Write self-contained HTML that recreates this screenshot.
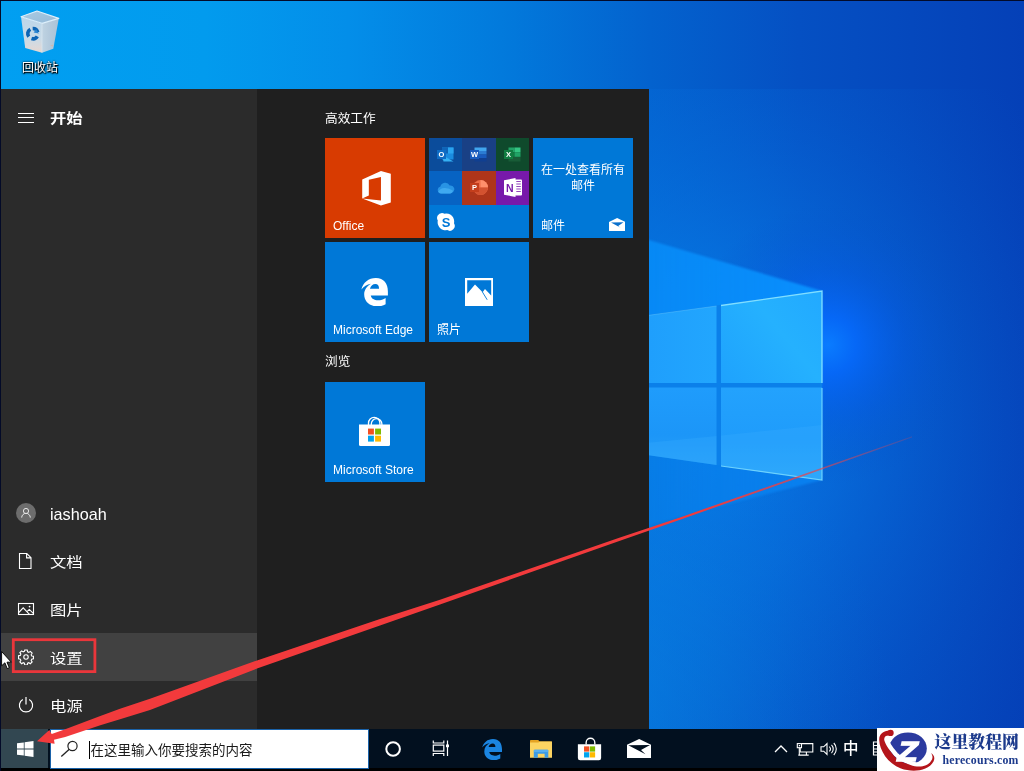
<!DOCTYPE html>
<html lang="zh-CN">
<head>
<meta charset="utf-8">
<title>开始</title>
<style>
html,body{margin:0;padding:0;}
body{width:1024px;height:771px;overflow:hidden;position:relative;background:#0450c8;
  font-family:"Liberation Sans","Noto Sans CJK SC",sans-serif;color:#fff;}
.abs{position:absolute;}
#wall{position:absolute;left:0;top:0;width:1024px;height:771px;}
#bin-label{will-change:transform;position:absolute;left:10px;top:60px;width:60px;text-align:center;font-size:12px;line-height:16px;color:#fff;
  text-shadow:1px 1px 1px #000,0 0 2px #000,0 1px 2px #000;}
#menu{will-change:transform;position:absolute;left:1px;top:89px;width:648px;height:640px;background:#1f1f1f;}
#left{position:absolute;left:0;top:0;width:256px;height:640px;background:#2b2b2b;}
.row{position:absolute;left:0;width:256px;height:48px;}
.row .lbl{position:absolute;left:48.500px;top:0.500px;line-height:48px;font-size:15px;white-space:nowrap;transform:scale(1.090,0.900);transform-origin:0 50%;}
.row svg{position:absolute;}
.hdr{position:absolute;font-size:12.300px;line-height:16px;color:#fff;white-space:nowrap;transform:scale(1.030,1);transform-origin:0 50%;}
.tile{position:absolute;width:100px;height:100px;background:#0078d7;overflow:hidden;}
.tile .tl{position:absolute;left:8px;bottom:4px;font-size:12px;line-height:16px;white-space:nowrap;}
#taskbar{will-change:transform;position:absolute;left:0;top:729px;width:1024px;height:42px;background:#02101f;}
#wm{will-change:transform;position:absolute;left:877px;top:728px;width:147px;height:43px;background:#fff;overflow:hidden;}
</style>
</head>
<body>
<!-- WALLPAPER -->
<svg id="wall" viewBox="0 0 1024 771">
  <defs>
    <linearGradient id="bgH" x1="0" y1="0" x2="1" y2="0">
      <stop offset="0" stop-color="#019ff1"/>
      <stop offset="0.20" stop-color="#029bee"/>
      <stop offset="0.34" stop-color="#038ee9"/>
      <stop offset="0.49" stop-color="#027adc"/>
      <stop offset="0.635" stop-color="#0362ce"/>
      <stop offset="0.78" stop-color="#0550c3"/>
      <stop offset="1" stop-color="#0540b7"/>
    </linearGradient>
    <radialGradient id="amb" cx="700" cy="420" r="420" gradientUnits="userSpaceOnUse" gradientTransform="translate(700 420) scale(1 1.15) translate(-700 -420)">
      <stop offset="0" stop-color="#0a8af4" stop-opacity="0.75"/>
      <stop offset="0.35" stop-color="#0880ec" stop-opacity="0.5"/>
      <stop offset="0.7" stop-color="#0670e0" stop-opacity="0.2"/>
      <stop offset="1" stop-color="#0560d0" stop-opacity="0"/>
    </radialGradient>
    <radialGradient id="botamb" cx="560" cy="700" r="330" gradientUnits="userSpaceOnUse">
      <stop offset="0" stop-color="#0a8cea" stop-opacity="0.6"/>
      <stop offset="0.5" stop-color="#0880e0" stop-opacity="0.35"/>
      <stop offset="1" stop-color="#0670d8" stop-opacity="0"/>
    </radialGradient>
    <radialGradient id="glow" cx="828" cy="345" r="140" gradientUnits="userSpaceOnUse">
      <stop offset="0" stop-color="#0a7cff" stop-opacity="1"/>
      <stop offset="0.2" stop-color="#0668fa" stop-opacity="0.9"/>
      <stop offset="0.55" stop-color="#0558e4" stop-opacity="0.4"/>
      <stop offset="1" stop-color="#0550c8" stop-opacity="0"/>
    </radialGradient>
    <linearGradient id="beamUp" x1="822" y1="0" x2="350" y2="0" gradientUnits="userSpaceOnUse">
      <stop offset="0" stop-color="#0a92ff" stop-opacity="0.95"/>
      <stop offset="0.4" stop-color="#088efa" stop-opacity="0.8"/>
      <stop offset="1" stop-color="#0a90f0" stop-opacity="0"/>
    </linearGradient>
    <linearGradient id="beamDn" x1="822" y1="0" x2="350" y2="0" gradientUnits="userSpaceOnUse">
      <stop offset="0" stop-color="#0a86f6" stop-opacity="0.8"/>
      <stop offset="0.4" stop-color="#0880ea" stop-opacity="0.5"/>
      <stop offset="1" stop-color="#0a84e0" stop-opacity="0"/>
    </linearGradient>
    <linearGradient id="paneUR" x1="721" y1="383" x2="822" y2="300" gradientUnits="userSpaceOnUse">
      <stop offset="0" stop-color="#1ea2fd"/>
      <stop offset="0.6" stop-color="#25b1fe"/>
      <stop offset="1" stop-color="#22aaff"/>
    </linearGradient>
    <linearGradient id="paneUL" x1="649" y1="0" x2="716" y2="0" gradientUnits="userSpaceOnUse">
      <stop offset="0" stop-color="#1f9ffc"/>
      <stop offset="1" stop-color="#22a6fe"/>
    </linearGradient>
    <linearGradient id="paneLR" x1="0" y1="388" x2="0" y2="480" gradientUnits="userSpaceOnUse">
      <stop offset="0" stop-color="#23a2fd"/>
      <stop offset="0.55" stop-color="#1f9cfb"/>
      <stop offset="1" stop-color="#2aa6fa"/>
    </linearGradient>
    <linearGradient id="paneLL" x1="0" y1="388" x2="0" y2="465" gradientUnits="userSpaceOnUse">
      <stop offset="0" stop-color="#1f9cfc"/>
      <stop offset="0.6" stop-color="#1c96f8"/>
      <stop offset="1" stop-color="#259ff8"/>
    </linearGradient>
    <filter id="soft" x="-5%" y="-5%" width="110%" height="110%" color-interpolation-filters="sRGB"><feGaussianBlur stdDeviation="1.2"/></filter>
  </defs>
  <rect width="1024" height="771" fill="url(#bgH)"/>
  <rect x="560" y="89" width="464" height="682" fill="url(#amb)"/>
  <rect x="560" y="380" width="464" height="391" fill="url(#botamb)"/>
  <!-- glow right of window -->
  <rect x="640" y="150" width="384" height="400" fill="url(#glow)"/>
  <!-- light beams to the left -->
  <g filter="url(#soft)">
  <polygon points="822,480 350,602 350,383 822,383" fill="url(#beamDn)"/>
  <polygon points="822,291 350,152 350,470 822,383" fill="url(#beamUp)"/>
  </g>
  <!-- window gaps -->
  <polygon points="640,316 822,291 822,480 640,454" fill="#0b80ea"/>
  <!-- panes -->
  <polygon points="721,305.5 822,291 822,383 721,383" fill="url(#paneUR)"/>
  <polygon points="640,316.5 716.5,306 716.5,383 640,383" fill="url(#paneUL)"/>
  <polygon points="721,387.5 822,387.5 822,480 721,466" fill="url(#paneLR)"/>
  <polygon points="640,387.5 716.5,387.5 716.5,465 640,454" fill="url(#paneLL)"/>
  <!-- floor reflection inside lower panes -->
  <polygon points="640,443.5 716.5,436 716.5,465 640,454" fill="#3ab0ff" fill-opacity="0.25"/>
  <polygon points="721,435.500 822,425 822,480 721,466" fill="#3ab0ff" fill-opacity="0.25"/>
  <!-- bright edges -->
  <polyline points="721,305.5 822,291 822,383" fill="none" stroke="#86e2ff" stroke-width="1.3" stroke-opacity="0.95"/>
  <polyline points="822,388 822,480 721,466" fill="none" stroke="#7adcff" stroke-width="1.2" stroke-opacity="0.85"/>
  <line x1="640" y1="316.5" x2="716.5" y2="306" stroke="#5cc4ff" stroke-width="1" stroke-opacity="0.5"/>
</svg>

<!-- START MENU -->
<div id="menu">
  <div id="left">
    <!-- hamburger -->
    <svg class="abs" style="left:17px;top:23px" width="17" height="13" viewBox="0 0 17 13"><path d="M0 1.5h16M0 5.5h16M0 10.5h16" stroke="#fff" stroke-width="1.1" fill="none"/></svg>
    <div class="abs" style="left:48.500px;top:19px;font-size:15px;line-height:20px;font-weight:bold;white-space:nowrap;transform:scale(1.090,0.900);transform-origin:0 50%">开始</div>

    <div class="row" style="top:400px">
      <svg style="left:15px;top:14px" width="20" height="20" viewBox="0 0 20 20"><circle cx="10" cy="10" r="10" fill="#6d6d6d"/><circle cx="10" cy="8" r="2.6" fill="none" stroke="#e6e6e6" stroke-width="1"/><path d="M5.7 14.6a4.3 4.3 0 0 1 8.6 0" fill="none" stroke="#e6e6e6" stroke-width="1"/></svg>
      <div class="lbl" style="font-size:16.200px;left:49px;top:0.500px;transform:none">iashoah</div>
    </div>
    <div class="row" style="top:448px">
      <svg style="left:17px;top:15px" width="15" height="18" viewBox="0 0 15 18"><path d="M1.5 1.5h7.3l4.2 4.2v10.8h-11.5z M8.6 1.7v4.2h4.2" fill="none" stroke="#fff" stroke-width="1.1"/></svg>
      <div class="lbl">文档</div>
    </div>
    <div class="row" style="top:496px">
      <svg style="left:16px;top:17px" width="18" height="14" viewBox="0 0 18 14"><rect x="1.5" y="1.5" width="15" height="11" fill="none" stroke="#fff" stroke-width="1.1"/><path d="M1.8 10.5l4.4-4.6 6.3 6.4M10 9.6l2.3-2.2 4 4" fill="none" stroke="#fff" stroke-width="1.1"/><circle cx="12.6" cy="4.6" r="0.9" fill="#fff"/></svg>
      <div class="lbl">图片</div>
    </div>
    <div class="row" style="top:544px;background:#414141">
      <svg style="left:17px;top:15.900px" width="16" height="16" viewBox="0 0 18 18"><g fill="none" stroke="#fff" stroke-width="1.250"><circle cx="9" cy="9" r="2.500"/><path d="M7.6 1.2h2.8l.4 2 1.4.6 1.7-1.1 2 2-1.1 1.7.6 1.4 2 .4v2.8l-2 .4-.6 1.4 1.1 1.7-2 2-1.7-1.1-1.4.6-.4 2H7.600l-.4-2-1.400-.6-1.700 1.100-2-2 1.100-1.700-.6-1.400-2-.4V7.600l2-.4.6-1.400-1.100-1.700 2-2 1.700 1.100 1.400-.6z"/></g></svg>
      <div class="lbl">设置</div>
    </div>
    <div class="row" style="top:592px">
      <svg style="left:16px;top:15px" width="18" height="18" viewBox="0 0 18 18"><path d="M5.8 3.6a6.6 6.6 0 1 0 6.400 0" fill="none" stroke="#fff" stroke-width="1.2"/><path d="M9 1v7.500" stroke="#fff" stroke-width="1.2"/></svg>
      <div class="lbl">电源</div>
    </div>
  </div>

  <!-- TILES -->
  <div class="hdr" style="left:323.500px;top:21.700px">高效工作</div>
  <div class="hdr" style="left:323.500px;top:265.300px">浏览</div>

  <div class="tile" style="left:324px;top:49px;background:#d83b01">
    <svg class="abs" style="left:36.500px;top:33.200px" width="29" height="34.500" viewBox="0 0 28.5 34.4"><path d="M0 27.400V8.500L18.700 0l9.800 2.700v28.800l-9.800 2.900L0 27.400l18.700 2.100V6L6.600 8.800v15.700z" fill="#fff"/></svg>
    <div class="tl">Office</div>
  </div>

  <div class="tile" style="left:428px;top:49px" id="folder">
    <div class="abs" style="left:0;top:0;width:33px;height:32.500px;background:#0b4c9b"></div>
    <div class="abs" style="left:33px;top:0;width:34px;height:32.500px;background:#194085"></div>
    <div class="abs" style="left:67px;top:0;width:33px;height:32.500px;background:#0f4a2c"></div>
    <div class="abs" style="left:0;top:32.500px;width:33px;height:34px;background:#0763c3"></div>
    <div class="abs" style="left:33px;top:32.500px;width:34px;height:34px;background:#ae351a"></div>
    <div class="abs" style="left:67px;top:32.500px;width:33px;height:34px;background:#7719aa"></div>
    <!-- outlook -->
    <svg class="abs" style="left:8px;top:9px" width="17" height="15" viewBox="0 0 17 15"><rect x="5" y="0.500" width="11.500" height="12" fill="#1a8ce0"/><rect x="5" y="0.500" width="6" height="6" fill="#0f64b8"/><rect x="11" y="0.500" width="5.500" height="6" fill="#2aa4f0"/><path d="M5 8l11.500 6.500H6.500z" fill="#35b0f4"/><rect x="0" y="3" width="9" height="9" fill="#0f6cc4"/><text x="4.500" y="10.300" font-family="Liberation Sans,sans-serif" font-size="7.500" font-weight="bold" fill="#fff" text-anchor="middle">O</text></svg>
    <!-- word -->
    <svg class="abs" style="left:41px;top:9px" width="17" height="15" viewBox="0 0 17 15"><rect x="4.500" y="0.500" width="12" height="3.500" fill="#41a5ee"/><rect x="4.500" y="4" width="12" height="3.500" fill="#2b7cd3"/><rect x="4.500" y="7.500" width="12" height="3.500" fill="#185abd"/><rect x="4.500" y="11" width="12" height="3.500" fill="#103f91"/><rect x="0" y="3" width="9" height="9" fill="#185abd"/><text x="4.500" y="10.300" font-family="Liberation Sans,sans-serif" font-size="7.500" font-weight="bold" fill="#fff" text-anchor="middle">W</text></svg>
    <!-- excel -->
    <svg class="abs" style="left:75px;top:9px" width="17" height="15" viewBox="0 0 17 15"><rect x="4.500" y="0.500" width="6" height="4.700" fill="#21a366"/><rect x="10.500" y="0.500" width="6" height="4.700" fill="#33c481"/><rect x="4.500" y="5.200" width="6" height="4.700" fill="#107c41"/><rect x="10.500" y="5.200" width="6" height="4.700" fill="#21a366"/><rect x="4.500" y="9.900" width="12" height="4.600" fill="#185c37"/><rect x="0" y="3" width="9" height="9" fill="#107c41"/><text x="4.500" y="10.300" font-family="Liberation Sans,sans-serif" font-size="7.500" font-weight="bold" fill="#fff" text-anchor="middle">X</text></svg>
    <!-- onedrive -->
    <svg class="abs" style="left:8px;top:44px" width="18" height="12" viewBox="0 0 18 12"><path d="M4 11.500a3.500 3.500 0 0 1-.6-6.900 5 5 0 0 1 9.300-1.100 3.800 3.800 0 0 1 2.300 7.200q-.6.800-1.800.8z" fill="#2893e4"/><path d="M1.200 9.800q2-3.400 6.200-3.700 4.600-.2 8.700 2.600a3.700 3.700 0 0 1-2.900 2.800H4a3.500 3.500 0 0 1-2.800-1.700z" fill="#3fa9f0"/></svg>
    <!-- powerpoint -->
    <svg class="abs" style="left:41px;top:41px" width="18" height="17" viewBox="0 0 18 17"><circle cx="10.500" cy="8.500" r="7.500" fill="#ed6c47"/><path d="M10.500 1a7.500 7.500 0 0 1 7.500 7.500h-7.500z" fill="#ff8f6b"/><path d="M3 8.500h15a7.500 7.500 0 0 1-15 0z" fill="#d35230"/><rect x="0" y="4" width="9" height="9" fill="#c43e1c"/><text x="4.500" y="11.300" font-family="Liberation Sans,sans-serif" font-size="7.500" font-weight="bold" fill="#fff" text-anchor="middle">P</text></svg>
    <!-- onenote -->
    <svg class="abs" style="left:75px;top:40px" width="19" height="19" viewBox="0 0 19 19"><path d="M11 1.500h6q1 0 1 1v14q0 1-1 1h-6z" fill="#fff"/><path d="M12.300 3.500h4.500M12.300 6h4.500M12.300 8.500h4.500M12.300 11h4.500M12.300 13.500h4.500" stroke="#7719aa" stroke-width="0.800"/><path d="M0 2.300L11.500 0v19L0 16.700z" fill="#fff"/><text x="5.800" y="13.500" font-family="Liberation Sans,sans-serif" font-size="10.500" font-weight="bold" fill="#7719aa" text-anchor="middle">N</text></svg>
    <!-- skype -->
    <svg class="abs" style="left:8px;top:75px" width="18" height="18" viewBox="0 0 18 18"><path d="M5 0a5 5 0 0 1 2.500.7 8 8 0 0 1 9.500 9.500 5 5 0 0 1-6.800 6.900A8 8 0 0 1 .8 7.600 5 5 0 0 1 5 0z" fill="#fff"/><text x="9" y="13.600" font-family="Liberation Sans,sans-serif" font-size="13" font-weight="bold" fill="#0078d7" text-anchor="middle">S</text></svg>
  </div>

  <div class="tile" style="left:532px;top:49px">
    <div class="abs" style="left:0;top:23.700px;width:100px;text-align:center;font-size:12px;line-height:16px">在一处查看所有<br>邮件</div>
    <div class="tl">邮件</div>
    <svg class="abs" style="left:75.800px;top:79.900px" width="16.300" height="13.100" viewBox="0 0 16.300 13.100"><path d="M0 3.900L8.100 0l8.200 3.900V13.100H0z" fill="#fff"/><path d="M2 4.400L14.500 4.200 9.200 7.900 11.700 9.800z" fill="#0a70cc"/></svg>
  </div>

  <div class="tile" style="left:324px;top:153px" id="edge">
    <svg class="abs" style="left:36.200px;top:35.800px" width="27" height="28.400" viewBox="0 0 20 21.200"><path fill-rule="evenodd" d="M0.200 8.600C1.500 3.500 5.500 0 11 0C17 0 20 4.200 20 10V13.100H7.200C7.600 15.400 9.800 16.700 12.600 16.700C14.800 16.700 16.600 16 18.300 14.900V19.600C16.600 20.600 14.600 21.200 12.200 21.200C6.400 21.200 2.300 17.600 2.300 12.400C2.300 8.800 4.300 6 7.400 4.300C4.400 4.900 1.800 6.400 0.200 8.600ZM6.600 8C7.200 5.800 8.800 4.500 10.600 4.500C12.600 4.500 13.400 6 13.400 8Z" fill="#fff"/></svg>
    <div class="tl">Microsoft Edge</div>
  </div>
  <div class="tile" style="left:428px;top:153px" id="photos">
    <svg class="abs" style="left:35.800px;top:35.800px" width="28.300" height="28.200" viewBox="0 0 28.300 28.200"><rect width="28.300" height="28.200" fill="#fff"/><path d="M2.200 2.200H26.200V17.600L20 11.100 17.600 14.200 10 6.500 2.200 15.700z" fill="#0078d7"/><path d="M17.300 13.800L22.200 21.800" stroke="#0078d7" stroke-width="0.900"/></svg>
    <div class="tl">照片</div>
  </div>
  <div class="tile" style="left:324px;top:293px" id="store">
    <svg class="abs" style="left:33px;top:33px" width="33" height="32" viewBox="0 0 33 32"><path d="M10.500 10V8a5.700 5.700 0 0 1 11.400 0V10" fill="none" stroke="#fff" stroke-width="1.300"/><path d="M13.300 10V9a5.300 5.300 0 0 1 10.600 0V10" fill="none" stroke="#fff" stroke-width="1.300"/><path d="M1 9.500h31V29.500q0 1.500-1.500 1.500H2.500q-1.500 0-1.500-1.500z" fill="#fff"/><rect x="10" y="13.600" width="5.900" height="5.900" fill="#f25022"/><rect x="17.100" y="13.600" width="5.900" height="5.900" fill="#7fba00"/><rect x="10" y="20.700" width="5.900" height="5.900" fill="#00a4ef"/><rect x="17.100" y="20.700" width="5.900" height="5.900" fill="#ffb900"/></svg>
    <div class="tl">Microsoft Store</div>
  </div>
</div>

<!-- TASKBAR -->
<div id="taskbar">
  <div class="abs" style="left:0;top:39px;width:878px;height:3px;background:#000"></div>
  <!-- start button -->
  <div class="abs" style="left:1px;top:0;width:47px;height:39px;background:#324751"></div>
  <svg class="abs" style="left:17px;top:12px" width="17" height="16" viewBox="0 0 17 16"><path d="M0 2.300L6.800 1.400V7.600H0zM7.600 1.300L16.500 0V7.600H7.600zM0 8.400H6.800V14.600L0 13.700zM7.600 8.400H16.500V16L7.600 14.700z" fill="#fff"/></svg>
  <!-- search box -->
  <div class="abs" style="left:49.500px;top:0;width:319.500px;height:39.700px;background:#fff;box-sizing:border-box;border:1.900px solid #1a62a9"></div>
  <svg class="abs" style="left:60px;top:11px" width="18" height="18" viewBox="0 0 18 18"><circle cx="12.500" cy="6" r="4.600" fill="none" stroke="#222" stroke-width="1.200"/><path d="M9.300 9.300L1.300 16.600" stroke="#222" stroke-width="1.300"/></svg>
  <div class="abs" style="left:89px;top:12px;width:1px;height:18px;background:#000"></div>
  <div class="abs" style="left:90.500px;top:11.700px;font-size:13.500px;line-height:20px;color:#1a1a1a;white-space:nowrap">在这里输入你要搜索的内容</div>
  <!-- cortana -->
  <svg class="abs" style="left:384px;top:10.800px" width="18" height="18" viewBox="0 0 18 18"><circle cx="9.100" cy="9" r="6.800" fill="none" stroke="#fff" stroke-width="2"/></svg>
  <!-- task view -->
  <svg class="abs" style="left:432px;top:11px" width="18" height="17" viewBox="0 0 18 17"><g fill="none" stroke="#fff" stroke-width="1.200"><rect x="1.300" y="5.100" width="10.500" height="6"/><path d="M1.300 0.500V3H11.800V0.500M1.300 16V13.500H11.800V16M15.500 0.500V16"/></g><rect x="14" y="4.500" width="3" height="2.700" fill="#fff"/></svg>
  <!-- edge -->
  <svg class="abs" style="left:482px;top:9.600px" width="20" height="21.200" viewBox="0 0 20 21.200"><path fill-rule="evenodd" d="M0.200 8.600C1.500 3.500 5.500 0 11 0C17 0 20 4.200 20 10V13.100H7.200C7.600 15.400 9.800 16.700 12.600 16.700C14.800 16.700 16.600 16 18.300 14.900V19.600C16.600 20.600 14.600 21.200 12.200 21.200C6.400 21.200 2.300 17.600 2.300 12.400C2.300 8.800 4.300 6 7.400 4.300C4.400 4.900 1.800 6.400 0.200 8.600ZM6.600 8C7.200 5.800 8.800 4.500 10.600 4.500C12.600 4.500 13.400 6 13.400 8Z" fill="#1b85e1"/></svg>
  <!-- explorer -->
  <svg class="abs" style="left:530px;top:10.800px" width="22" height="18" viewBox="0 0 22 18"><path d="M0 0.800q0-.8.800-.8h7.400l1.600 1.600H21.200q.8 0 .8.800V4H0z" fill="#e5a323"/><path d="M0 2.400h8.500l1.300-.8H22V17.700H0z" fill="#fcd462"/><path d="M3.800 17.700v-6.900q0-1 1-1h12.500q1 0 1 1v6.900h-3.700v-4H7.800v4z" fill="#3c9ce6"/><rect x="3.800" y="9.800" width="14.500" height="2.200" rx="0.800" fill="#58b0f0"/></svg>
  <!-- store -->
  <svg class="abs" style="left:577px;top:7.500px" width="25" height="24" viewBox="0 0 33 32"><path d="M12 10V7.500a5.800 5.800 0 0 1 11.600 0V10" fill="none" stroke="#fff" stroke-width="1.800"/><path d="M1 9.500h31V28q0 3-3 3H4q-3 0-3-3z" fill="#fff"/><rect x="9.200" y="12.500" width="7" height="7" fill="#f25022"/><rect x="17" y="12.500" width="7" height="7" fill="#7fba00"/><rect x="9.200" y="20.300" width="7" height="7" fill="#00a4ef"/><rect x="17" y="20.300" width="7" height="7" fill="#ffb900"/></svg>
  <!-- mail -->
  <svg class="abs" style="left:627px;top:10px" width="24" height="19" viewBox="0 0 24 19"><path d="M0 5.700L12.200 0 24 5.700V19H0z" fill="#fff"/><path d="M1.300 6.200L23 6 14 11 18.500 15.300z" fill="#02101f"/></svg>
  <!-- tray -->
  <svg class="abs" style="left:774px;top:16px" width="14" height="8" viewBox="0 0 14 8"><path d="M1 7L7 1l6 6" fill="none" stroke="#fff" stroke-width="1.300"/></svg>
  <svg class="abs" style="left:795px;top:13px" width="19" height="14" viewBox="0 0 19 14"><g fill="none" stroke="#fff" stroke-width="1.100"><path d="M6.600 1.600H17.800V10H5.200V6"/><path d="M3.300 13.100h10.400M11.400 10v3M4.300 5.700v7.400"/><rect x="2.300" y="1.600" width="4.200" height="4.100"/></g><rect x="3.800" y="3" width="1.300" height="1.300" fill="#fff"/></svg>
  <svg class="abs" style="left:820px;top:13px" width="18" height="14" viewBox="0 0 18 14"><path d="M1 4.800h2.700L7 1.500v11L3.700 9.200H1z" fill="none" stroke="#fff" stroke-width="1.100"/><path d="M9.300 4.600a3.400 3.400 0 0 1 0 4.800M11.500 2.800a6 6 0 0 1 0 8.400M13.800 1a8.500 8.500 0 0 1 0 12" fill="none" stroke="#fff" stroke-width="1.100"/></svg>
  <div class="abs" style="left:843px;top:10px;font-size:15.500px;line-height:20px;font-weight:500;color:#fff">中</div>
  <svg class="abs" style="left:872px;top:12px" width="6" height="16" viewBox="0 0 6 16"><path d="M1.500 1h4.500v13H1.500zM1.500 4.500h4M1.500 8h4M1.500 11h4" fill="none" stroke="#fff" stroke-width="1.200"/></svg>
</div>

<!-- WATERMARK -->
<div id="wm">
  <svg class="abs" style="left:0;top:0" width="64" height="43" viewBox="0 0 64 43">
    <ellipse cx="31" cy="20.400" rx="18.800" ry="16" fill="#2b3a9f"/>
    <path d="M9 8C9 13 13 20 19 26.500C23 30.500 28.500 33.300 34.500 35.300C40 37 46 37.500 51 36" fill="none" stroke="#fff" stroke-width="4.500"/>
    <path d="M12.500 2.600C6.500 3.200 2 6 2.200 12C2.500 22 10.500 35.500 24 40.500C35 44.500 51 43.500 56.500 33.500C58.500 29.500 56.500 26.500 54 25C56 28 56 30.500 54 33C50 39.500 40.500 39.500 33.500 37C27.500 35 23.500 33.500 20.500 31.200C17 28.500 7 15.500 7.200 11C7.400 8 9.500 7.200 13 7.500z" fill="#b4151b"/>
    <circle cx="13.600" cy="4.900" r="3.100" fill="#b4151b"/>
    <text transform="translate(30.500 32.800) scale(1.180 1)" font-family="Liberation Sans,sans-serif" font-size="28" font-weight="bold" font-style="italic" fill="#fff" stroke="#fff" stroke-width="1.400" text-anchor="middle">Z</text>
  </svg>
  <div class="abs" style="left:57.500px;top:4px;font-family:'Liberation Serif','Noto Serif CJK SC',serif;font-weight:900;font-size:16.900px;line-height:22px;color:#1c3a8c;white-space:nowrap">这里教程网</div>
  <div class="abs" style="left:65.500px;top:24px;font-family:'Liberation Serif',serif;font-weight:bold;font-size:11.800px;line-height:16px;color:#1c3a8c;white-space:nowrap;letter-spacing:0.200px">herecours.com</div>
</div>

<!-- RECYCLE BIN -->
<svg class="abs" style="left:19px;top:9px" width="42" height="46" viewBox="0 0 42 46">
  <defs>
    <linearGradient id="binL" x1="0" y1="0" x2="0" y2="1"><stop offset="0" stop-color="#bcd6e9"/><stop offset="0.600" stop-color="#c9dbe8"/><stop offset="0.850" stop-color="#dcd9da"/><stop offset="1" stop-color="#e6d6cf"/></linearGradient>
    <linearGradient id="binR" x1="0" y1="0" x2="1" y2="0"><stop offset="0" stop-color="#bfd3e2"/><stop offset="0.500" stop-color="#b3c9db"/><stop offset="1" stop-color="#a9c3d8"/></linearGradient>
    <linearGradient id="binT" x1="0" y1="0" x2="1" y2="1"><stop offset="0" stop-color="#a9cbe4"/><stop offset="1" stop-color="#94b9d6"/></linearGradient>
  </defs>
  <path d="M2 7.700L23 14.300 23 43.700 6.200 39z" fill="url(#binL)"/>
  <path d="M23 14.300L39.800 9.400 34.300 39.700 23 43.700z" fill="url(#binR)"/>
  <path d="M2 7.700L18 2 39.800 9.400 23 14.300z" fill="url(#binT)"/>
  <path d="M2 7.700L18 2 39.800 9.400 23 14.300z" fill="none" stroke="#dceefa" stroke-width="1.200" stroke-linejoin="round"/>
  <path d="M23 14.300L23 43.700" stroke="#dbe8f1" stroke-width="0.700"/>
  <path d="M31 36.500l3.300-1-.4 2.200z" fill="#e9a97c" fill-opacity="0.450"/>
  <g fill="none" stroke="#0c64b4" stroke-width="3.600">
    <path d="M9.800 27.700A5 5 0 0 1 11.300 20.300"/>
    <path d="M13.700 19.500A5 5 0 0 1 18.700 23.300"/>
    <path d="M18.300 27.300A5 5 0 0 1 12.500 29.500"/>
  </g>
  <path d="M14.600 23.500l2.500-3.300 2.800 4.300z" fill="#2b86d2"/>
</svg>
<div id="bin-label">回收站</div>

<!-- 1px dark frame at top and left -->
<div class="abs" style="left:0;top:0;width:1024px;height:1px;background:#030b2a"></div>
<div class="abs" style="left:0;top:0;width:1px;height:771px;background:#030a28"></div>

<!-- RED ANNOTATIONS -->
<svg class="abs" style="left:0;top:0;pointer-events:none" width="1024" height="771" viewBox="0 0 1024 771">
  <defs><linearGradient id="arr" x1="912" y1="0" x2="700" y2="0" gradientUnits="userSpaceOnUse"><stop offset="0" stop-color="#f0484c" stop-opacity="0.200"/><stop offset="0.500" stop-color="#f04044" stop-opacity="0.700"/><stop offset="1" stop-color="#f23a3c" stop-opacity="1"/></linearGradient></defs>
  <rect x="13.300" y="639.700" width="81.600" height="31.900" fill="none" stroke="#ea363b" stroke-width="2.800"/>
  <polygon points="912,436.300 680,517.400 620,537.400 440,599.700 380,619.100 257,660.500 150,698.800 120,708.800 100.300,716 65.200,729.300 51.700,734 49.300,729.900 37,741.200 54.600,743.700 54,739.800 65.200,736.900 100.300,725.200 120,719.300 150,709.900 257,668.500 380,625.400 440,604.400 620,540.800 680,519.800 912,437.500" fill="url(#arr)"/>
  <!-- mouse cursor -->
  <path d="M1.600 651.500V665.800L4.900 662.800L7.200 668.600L9.300 667.700L7 662.200H11.300z" fill="#fff" stroke="#000" stroke-width="0.900" stroke-linejoin="round"/>
</svg>
</body>
</html>
